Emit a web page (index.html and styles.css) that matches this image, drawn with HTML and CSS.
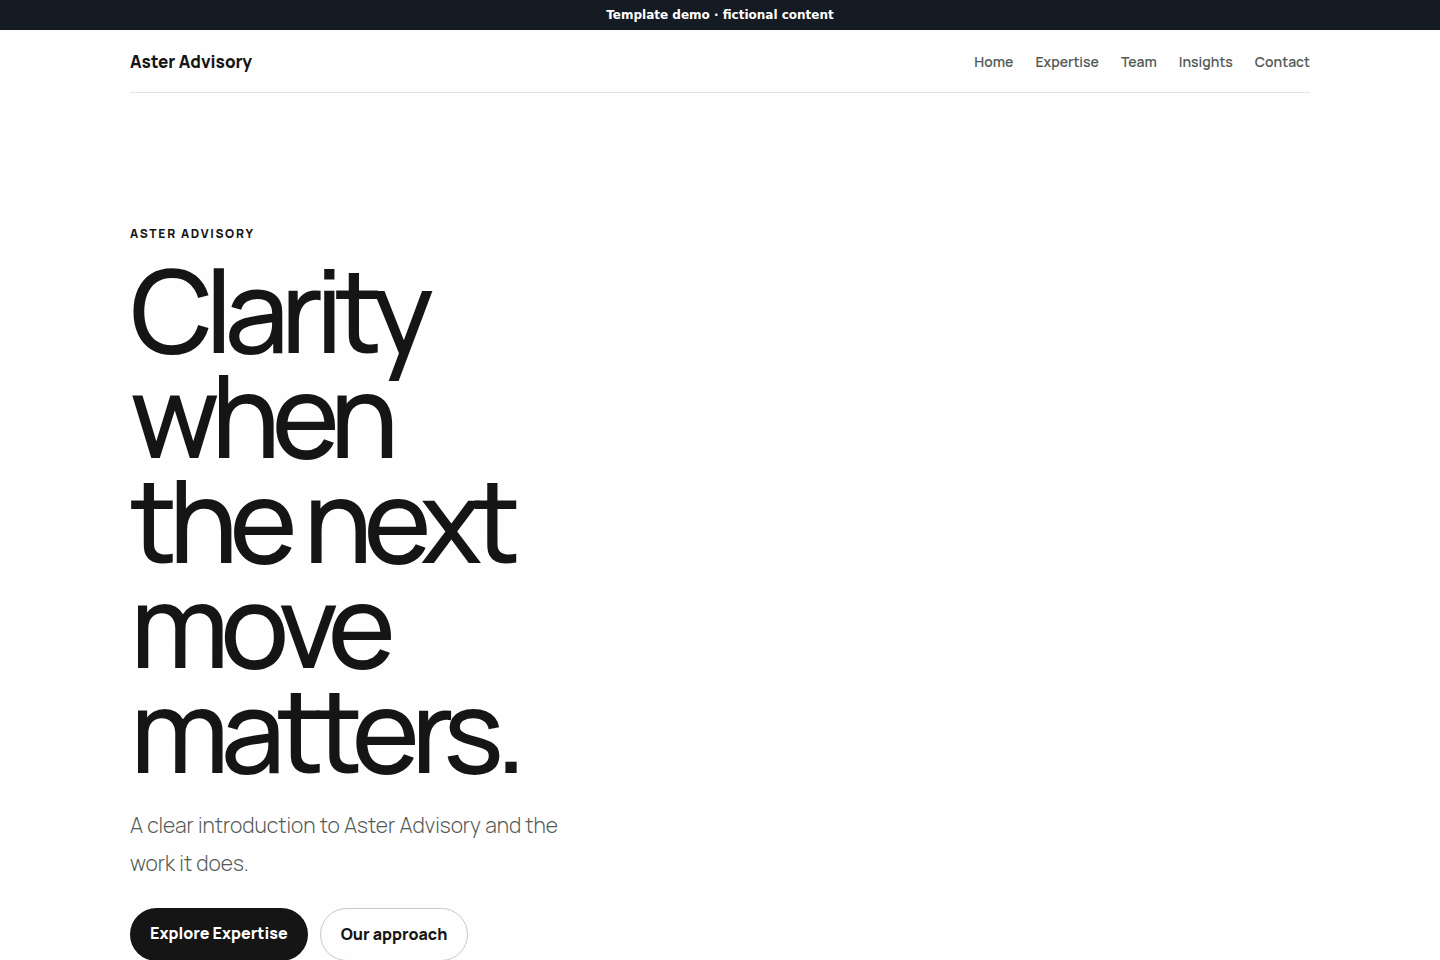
FILE: index.html
```
<!DOCTYPE html>
<html lang="en">
<head>
	<meta charset="UTF-8">
	<meta name="viewport" content="width=device-width, initial-scale=1.0">
	<title>Aster Advisory</title>
	<link rel="stylesheet" href="styles.css">
</head>
<body>
	<div class="demo-bar">Template demo · fictional content</div>
	<div class="container">
		<header class="header">
			<a class="brand" href="#">Aster Advisory</a>
			<nav class="nav">
				<a href="#">Home</a>
				<a href="#expertise">Expertise</a>
				<a href="#team">Team</a>
				<a href="#insights">Insights</a>
				<a href="#contact">Contact</a>
			</nav>
		</header>
		<main class="hero">
			<p class="eyebrow">Aster Advisory</p>
			<h1>Clarity when <br>the next move matters.</h1>
			<p class="lead">A clear introduction to Aster Advisory and the work it does.</p>
			<div class="actions">
				<a class="btn btn-dark" href="#expertise">Explore Expertise</a>
				<a class="btn btn-light" href="#approach">Our approach</a>
			</div>
		</main>
	</div>
</body>
</html>
```
FILE: styles.css
```
* {
	box-sizing: border-box;
}
body {
	margin: 0;
	font-family: Manrope, Inter, sans-serif;
	background-color: #fefefe;
	color: #151515;
}
a {
	color: inherit;
	text-decoration: none;
}
h1, p {
	margin: 0;
}
.demo-bar {
	padding: 6px 16px;
	background-color: #151b23;
	color: white;
	font: bold 12px/18px "DejaVu Sans", sans-serif;
	text-align: center;
}
.container {
	width: calc(100% - 40px);
	max-width: 1180px;
	margin: 0 auto;
}
.header {
	display: flex;
	align-items: center;
	justify-content: space-between;
	min-height: 63px;
	border-bottom: 1px solid #e2e3e2;
}
.brand {
	font-size: 17px;
	font-weight: 800;
}
.nav {
	display: flex;
	gap: 22px;
	color: #535b56;
	font-size: 14px;
	font-weight: 600;
}
.hero {
	max-width: 440px;
	padding-top: 132px;
}
.eyebrow {
	margin-bottom: 14px;
	font-size: 12px;
	line-height: 18px;
	font-weight: 800;
	letter-spacing: 0.14em;
	text-transform: uppercase;
}
h1 {
	font-size: 115px;
	line-height: 105px;
	font-weight: 500;
	letter-spacing: -0.075em;
}
.lead {
	margin: 24px 0 26px;
	color: #535b56;
	font-size: 21px;
	line-height: 38px;
	font-weight: 350;
}
.actions {
	display: flex;
	gap: 12px;
}
.btn {
	padding: 13px 20px;
	border-radius: 27px;
	font-size: 16px;
	line-height: 25px;
	font-weight: 800;
	white-space: nowrap;
}
.btn-dark {
	background-color: #151515;
	color: white;
}
.btn-light {
	border: 1px solid #c8c8c8;
}
@media (max-width: 768px) {
	.header {
		flex-wrap: wrap;
		gap: 12px;
		padding: 16px 0;
	}
	.nav {
		flex-wrap: wrap;
		gap: 12px;
	}
	.hero {
		padding: 64px 0;
	}
	h1 {
		font-size: 64px;
		line-height: 60px;
	}
	.actions {
		flex-wrap: wrap;
	}
}
```
